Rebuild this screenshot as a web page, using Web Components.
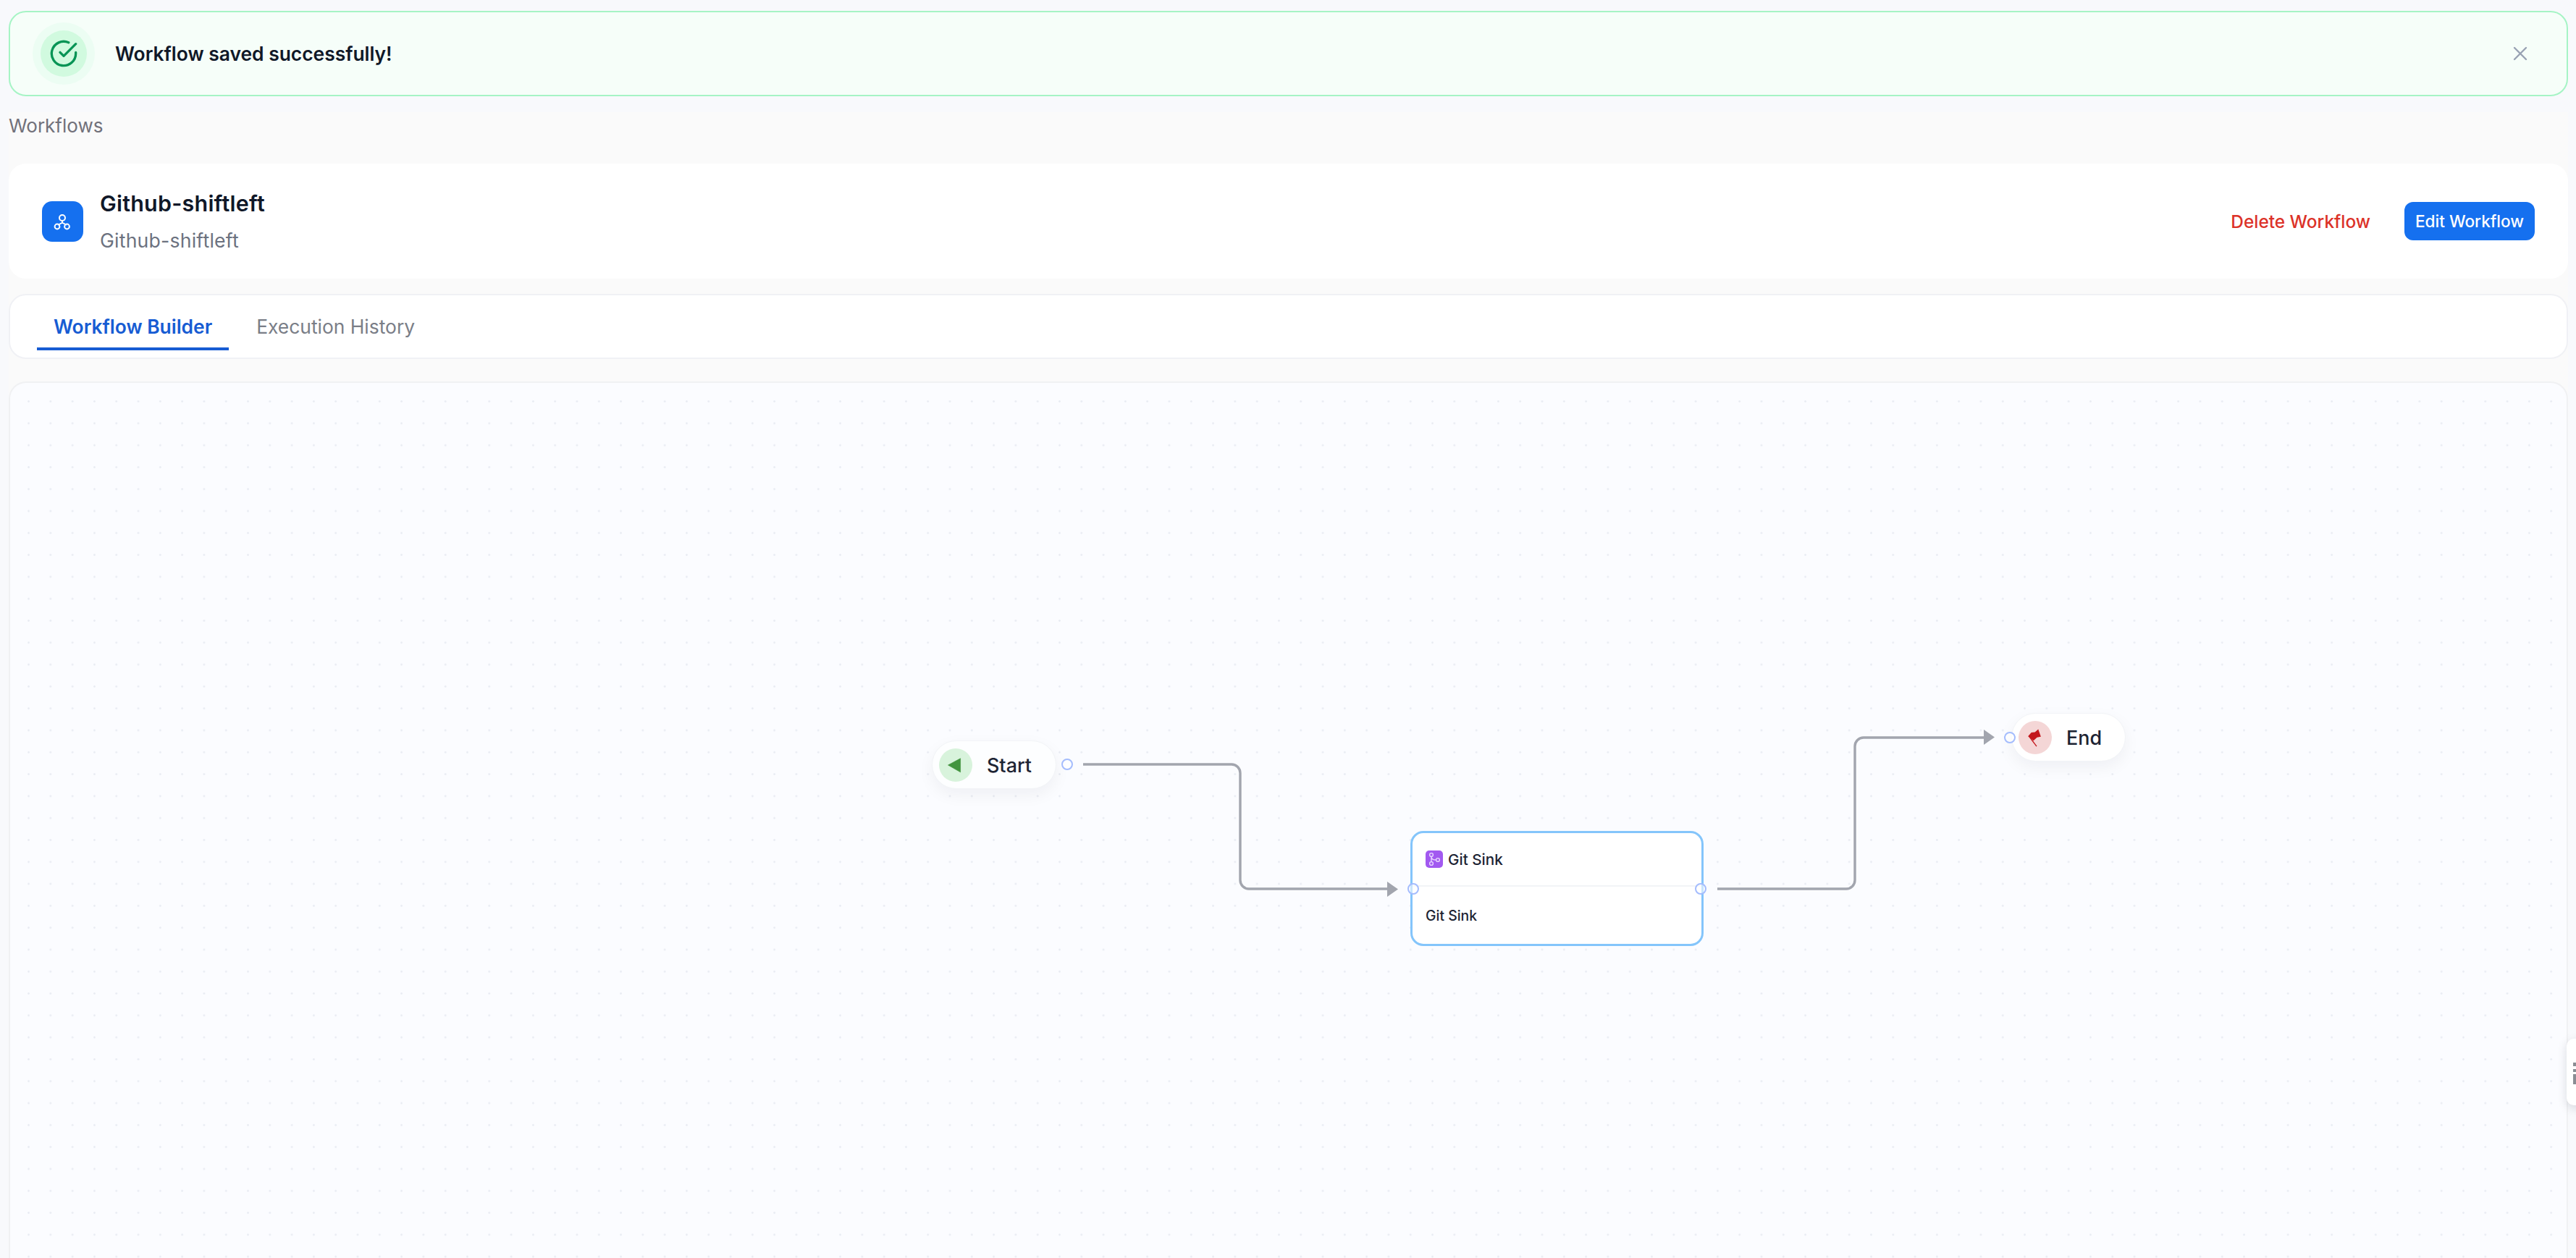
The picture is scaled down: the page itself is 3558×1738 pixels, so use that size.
<!DOCTYPE html>
<html lang="en"><head><meta charset="utf-8"><title>Workflow</title>
<style>
html,body{margin:0;padding:0;height:100%;overflow:hidden;background:#f8f9fc;font-family:Inter,"Liberation Sans",sans-serif;color:#101828;-webkit-font-smoothing:antialiased}
</style></head><body>
<wf-app>
  <wf-toast>Workflow saved successfully!</wf-toast>
  <wf-page>
    <wf-crumb>Workflows</wf-crumb>
    <wf-header title-text="Github-shiftleft" sub-text="Github-shiftleft"></wf-header>
    <wf-tabs></wf-tabs>
    <wf-canvas>
      <wf-terminal kind="start" style="left:1287px;top:1023px;width:172px">Start</wf-terminal>
      <wf-handle style="left:1466px;top:1048px"></wf-handle>
      <wf-task style="left:1948px;top:1148px" heading="Git Sink">Git Sink</wf-task>
      <wf-handle style="left:1944px;top:1220px"></wf-handle>
      <wf-handle style="left:2341px;top:1220px"></wf-handle>
      <wf-handle style="left:2768px;top:1011px"></wf-handle>
      <wf-terminal kind="end" style="left:2778px;top:985px;width:158px">End</wf-terminal>
    </wf-canvas>
  </wf-page>
  <wf-dock></wf-dock>
</wf-app>
<script>
function make(name, css, html, init){
  customElements.define(name, class extends HTMLElement{
    constructor(){super();const r=this.attachShadow({mode:'open'});const t=document.createElement('template');t.innerHTML='<style>'+css+'</style>'+html;r.appendChild(t.content.cloneNode(true));}
    connectedCallback(){ if(init) init(this, this.shadowRoot); }
  });
}
make('wf-app',`:host{display:flex;flex-direction:column;position:relative;width:100%;height:100vh;overflow:hidden;background:#f8f9fc}`,`<slot></slot>`);
make('wf-toast',`:host{display:flex;align-items:center;box-sizing:border-box;height:118px;margin:15px 11px 0 12px;padding:0 52px 0 31px;background:#f6fef9;border:2px solid #a6f4c5;border-radius:24px;font-size:26.4px;font-weight:600;color:#101828;flex:none}
.ring{width:86px;height:86px;border-radius:50%;background:#ecfdf3;display:flex;align-items:center;justify-content:center;flex:none}
.in{width:64px;height:64px;border-radius:50%;background:#d1fadf;display:flex;align-items:center;justify-content:center}
.msg{flex:1;margin-left:28px}
.x{width:24px;height:24px;flex:none;display:block}`,
`<div class="ring"><div class="in"><svg width="40" height="40" viewBox="0 0 24 24" fill="none" stroke="#079455" stroke-width="2" stroke-linecap="round" stroke-linejoin="round"><path d="M22 11.09V12a10 10 0 1 1-5.93-9.14M22 4 12 14.01l-3-3"/></svg></div></div><div class="msg"><slot></slot></div><svg class="x" viewBox="0 0 24 24" fill="none" stroke="#98a2b3" stroke-width="2.4" stroke-linecap="round"><path d="M4 4l16 16M20 4 4 20"/></svg>`);
make('wf-page',`:host{display:flex;flex-direction:column;flex:1;min-height:0;margin:22px 11px 0 12px;background:#fafafa}`,`<slot></slot>`);
make('wf-crumb',`:host{display:block;height:71px;padding-top:2px;box-sizing:border-box;font-size:26px;line-height:34px;color:#71717a;flex:none}`,`<slot></slot>`);
make('wf-header',`:host{display:flex;align-items:center;box-sizing:border-box;height:159px;padding:0 46px;background:#fff;border-radius:24px;flex:none}
.ic{width:57px;height:56px;border-radius:14px;background:#1570ef;flex:none;display:block}
.txt{flex:1;margin-left:23px}
.t{font-size:30.4px;letter-spacing:.25px;line-height:40px;font-weight:600;color:#101828}
.s{font-size:26.6px;letter-spacing:.22px;line-height:36px;margin-top:13px;color:#6c727f}
.del{font:500 24.4px Inter,sans-serif;color:#dc3228;background:none;border:0;padding:0;margin-right:47px}
.edit{font:500 22.6px Inter,sans-serif;color:#fff;background:#1570ef;border:0;border-radius:12px;width:180px;height:53px;padding:0}`,
`<svg class="ic" viewBox="0 0 57 56" fill="none" stroke="#fff" stroke-width="2"><circle cx="28" cy="23" r="4"/><circle cx="21" cy="35" r="3.4"/><circle cx="34.5" cy="35" r="3.4"/><path d="M28 27v2.5M28 29.5 23 32.5M28 29.5 33 32.5" stroke-linecap="round"/></svg><div class="txt"><div class="t" id="t"></div><div class="s" id="s"></div></div><button class="del">Delete Workflow</button><button class="edit">Edit Workflow</button>`,
(h,r)=>{r.getElementById('t').textContent=h.getAttribute('title-text');r.getElementById('s').textContent=h.getAttribute('sub-text');});
make('wf-tabs',`:host{display:flex;box-sizing:border-box;height:90px;margin-top:21px;padding:10px 0 0 37px;background:#fff;border:2px solid #f0f1f5;border-radius:24px;gap:15px;flex:none}
.tab{box-sizing:border-box;height:66px;padding:4px 23px 0;display:flex;align-items:center;font-size:26.4px;font-weight:400;color:#7a7e87;border-bottom:4px solid transparent}
.on{color:#175cd3;font-weight:600;border-bottom-color:#175cd3}`,
`<div class="tab on">Workflow Builder</div><div class="tab">Execution History</div>`);
make('wf-canvas',`:host{display:block;position:relative;flex:1;min-height:0;margin-top:31px;box-sizing:border-box;background-color:#fbfcff;border:2px solid #f0f1f3;border-bottom:0;border-radius:24px 24px 0 0;overflow:hidden;background-image:radial-gradient(circle at center,#e9ecf3 1px,transparent 1.6px);background-size:30.31px 30.31px;background-position:10.4px 10.4px;background-origin:padding-box}
.stage{position:absolute;left:-14px;top:-529px;width:3558px;height:1738px}
svg{position:absolute;left:0;top:0}
::slotted(*){position:absolute}`,
`<div class="stage"><svg width="3558" height="1738" fill="none" stroke="#a2a5ae" stroke-width="3.4"><path d="M1496 1056H1701a12 12 0 0 1 12 12V1216a12 12 0 0 0 12 12H1918"/><path d="M2372 1228H2550a12 12 0 0 0 12-12V1031a12 12 0 0 1 12-12H2742"/><path d="M1916 1218 1931 1228.5 1916 1239Z" fill="#a2a5ae" stroke="none"/><path d="M2740 1008 2755 1018.5 2740 1029Z" fill="#a2a5ae" stroke="none"/></svg><slot></slot></div>`);
make('wf-terminal',`:host{display:flex;align-items:center;box-sizing:border-box;height:67px;padding-left:9px;background:#fff;border:1.5px solid #f2f4f7;border-radius:34px;box-shadow:0 8px 22px rgba(16,24,40,.05);font-size:26.9px;font-weight:500;color:#1d2433}
#ic{display:block;width:46px;height:46px;flex:none}
.c{width:46px;height:46px;border-radius:50%;display:block}
.l{margin-left:20px}
:host([kind=start]) {background:#fdfeff}`,
`<span id="ic"></span><div class="l"><slot></slot></div>`,
(h,r)=>{const k=h.getAttribute('kind');r.getElementById('ic').innerHTML= k==='start'
 ?`<svg class="c" viewBox="110 98 140 140" style="background:#d8f3dc"><path d="M148 168 200 140V198Z" fill="#43943f" stroke="#43943f" stroke-width="2" stroke-linejoin="round"/></svg>`
 :`<svg class="c" viewBox="862 105 140 140" style="background:#f4d6d6"><path d="M902 170 916 154 931 152 945 140 956 171 940 174 925 188Z" fill="#c3161c"/><path d="M908 172 938 212" stroke="#c3161c" stroke-width="4" fill="none"/></svg>`;});
make('wf-handle',`:host{display:block;box-sizing:border-box;width:16px;height:16px;border-radius:50%;border:2px solid #a4bcfd;background:rgba(255,255,255,.55);z-index:3}`,``);
make('wf-task',`:host{display:flex;flex-direction:column;box-sizing:border-box;width:405px;height:159px;background:#fff;border:3.5px solid #84c5fb;border-radius:18px}
.h{display:flex;align-items:center;gap:7px;height:74px;box-sizing:border-box;padding-left:18px;border-bottom:2px solid #f2f4f7;font-size:20.7px;font-weight:500;color:#1d2433}
.ic{width:24px;height:24px;border-radius:5px;background:#a259f0;display:block;flex:none}
.b{flex:1;display:flex;align-items:center;padding-left:18px;font-size:19.4px;font-weight:500;color:#1d2433}`,
`<div class="h"><svg class="ic" viewBox="0 0 24 24" fill="none" stroke="#e9d7fe" stroke-width="1.4"><circle cx="8" cy="6" r="2.4"/><circle cx="8" cy="18" r="2.4"/><circle cx="17" cy="13" r="2.4"/><path d="M8 8.4v7.2M8 8.4c0 3.6 2.6 4.6 6.6 4.6"/></svg><span id="h"></span></div><div class="b"><slot></slot></div>`,
(h,r)=>{r.getElementById('h').textContent=h.getAttribute('heading');});
make('wf-dock',`:host{display:block;position:absolute;left:3545px;top:1435px;width:40px;height:92px;background:#fff;border-radius:10px;box-shadow:0 4px 14px rgba(16,24,40,.14)}
i{position:absolute;left:9px;background:#8a8d94;display:block}`,
`<i style="top:33px;width:6px;height:5px"></i><i style="top:42px;width:6px;height:4px"></i><i style="top:49px;width:6px;height:14px"></i>`);
</script></body></html>
